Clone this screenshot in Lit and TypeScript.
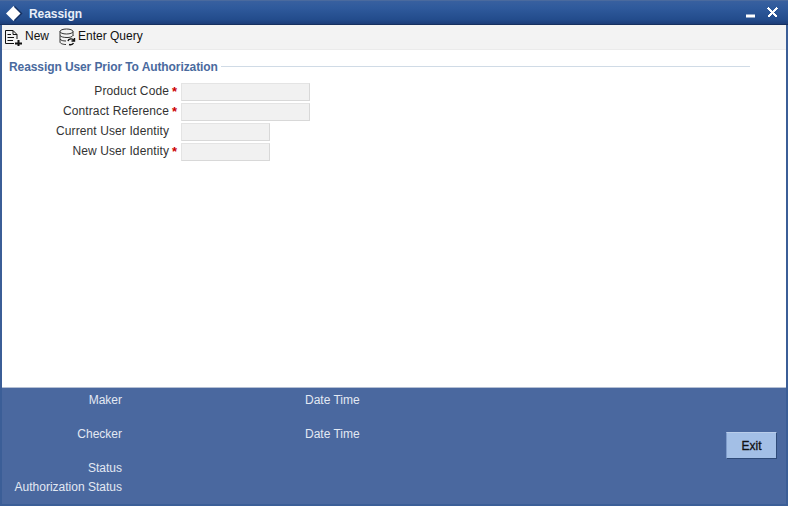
import { LitElement, html, css } from "lit";
import { customElement } from "lit/decorators.js";

@customElement("app-root")
export class AppRoot extends LitElement {
  static styles = css`
    :host { display: block; width: 788px; height: 506px; font-family: "Liberation Sans", Arial, sans-serif; font-size: 12px; overflow: hidden; }
    .win { box-sizing: border-box; width: 788px; height: 506px; display: flex; flex-direction: column; background: #3b5e97; padding: 0 2px 2px 2px; }
    .title { height: 25px; flex: none; margin: 0 -2px; padding: 2px 0 0 6px; box-sizing: border-box; display: flex; align-items: center; gap: 6px; color: #fff;
      background: linear-gradient(#38609f 0, #2f5a9c 30%, #234c8c 80%, #1c3d78 100%); border-top: 1px solid #4a6a9e; border-bottom: 1px solid #16305f; }
    .title .t { font-size: 12px; font-weight: bold; color: #e8eef8; letter-spacing: -0.05px; flex: 1; }
    .title svg { display: block; flex: none; }
    .ctrl { display: flex; align-items: center; gap: 12px; padding-right: 10px; margin-top: -3px; }
    .toolbar { height: 25px; flex: none; box-sizing: border-box; background: #f3f3f3; border-bottom: 1px solid #ebebeb; display: flex; align-items: center; padding: 0 0 2px 2px; gap: 9px; color: #111; }
    .tool { display: flex; align-items: center; gap: 2px; }
    .tool svg { display: block; margin-top: 1px; }
    .main { flex: 1; background: #fff; padding: 9px 0 0 7px; color: #333; }
    .legend { display: flex; align-items: center; width: 741px; gap: 3px; color: #4a6a9e; font-weight: bold; height: 16px; letter-spacing: -0.09px; }
    .legend .line { flex: 1; height: 1px; background: #d0dbe6; margin-top: -1px; }
    .form { margin-top: 7px; display: grid; grid-template-columns: 160px 12px auto; }
    .lab { height: 20px; line-height: 19px; text-align: right; color: #333; letter-spacing: 0.11px; white-space: nowrap; }
    .star { color: #c00; font-weight: bold; font-size: 13px; line-height: 19px; padding-left: 3px; }
    .field { height: 20px; display: flex; align-items: center; }
    .inp { box-sizing: border-box; height: 18px; background: #f1f1f1; border: 1px solid #e4e4e4; border-bottom-color: #d8d8d8; border-right-color: #d8d8d8; }
    .w1 { width: 129px; }
    .w2 { width: 89px; }
    .foot { height: 117px; flex: none; box-sizing: border-box; background: #4a689f; border-top: 1px solid #b5c0d4; display: grid; grid-template-columns: 120px 183px 1fr auto; grid-template-rows: 19px 34px 34px 19px; color: #e3e9f3; }
    .foot .r { text-align: right; align-self: end; line-height: 14px; }
    .foot .l { grid-column: 3; align-self: end; line-height: 14px; }
    .exit { grid-column: 4; grid-row: 2 / span 2; box-sizing: border-box; width: 51px; height: 27px; margin: 25px 9px 0 0; background: #a3bfe6; border: 1px solid; border-color: #b9cdea #2e4a78 #2e4a78 #7f9ccb; color: #111; font: 12px "Liberation Sans", Arial, sans-serif; -webkit-text-stroke: 0.3px #111; padding: 0; }
    .s3 { grid-row: 3; grid-column: 1; }
    .s4 { grid-row: 4; grid-column: 1; white-space: nowrap; }
    .g1 { grid-row: 1; grid-column: 1; }
    .g2 { grid-row: 2; grid-column: 1; }
    .d1 { grid-row: 1; }
    .d2 { grid-row: 2; }
  `;

  render() {
    const rows = [
      ["Product Code", true, "w1"],
      ["Contract Reference", true, "w1"],
      ["Current User Identity", false, "w2"],
      ["New User Identity", true, "w2"],
    ] as const;
    return html`<div class="win">
      <div class="title">
        <svg width="17" height="15" viewBox="0 0 17 15"><path d="M7.5 0 15 7.5 7.5 15 0 7.5Z" fill="#fff"/><path d="M8.5 0.5 15.5 7.5 8.5 14.5" fill="none" stroke="#142f5f" stroke-width="1.4"/></svg>
        <span class="t">Reassign</span>
        <div class="ctrl">
          <svg width="9" height="4" viewBox="0 0 9 4" style="margin-top:8px"><rect width="9" height="3" y="0.5" fill="#fff"/></svg>
          <svg width="11" height="11" viewBox="0 0 11 11" shape-rendering="crispEdges"><path d="M1 1 10 10M10 1 1 10" stroke="#fff" stroke-width="2"/></svg>
        </div>
      </div>
      <div class="toolbar">
        <div class="tool">
          <svg width="19" height="18" viewBox="0 0 19 18" fill="none" stroke="#111"><path d="M1.5 15.5V2.5H9L13 6.5V11"/><path d="M9 2.5V6.5H13M3.5 6.5H7M3.5 9.5H10M3.5 12.5H9M1.5 15.5H10"/><path d="M11 15.5H18M14.5 12V18" stroke-width="2"/></svg>
          <span>New</span>
        </div>
        <div class="tool">
          <svg width="18" height="18" viewBox="0 0 18 18" fill="none" stroke="#333"><ellipse cx="8.5" cy="3.5" rx="6.5" ry="2.5"/><path d="M2 3.5V14C2 15.5 5 16.5 8 16.5M15 3.5V8M2 7.5C3 9 6 9.5 9 9.5S14 9 15 7.5M2 11C3 12.5 5 13 8 13"/><path d="M10 13C10.5 10.5 14.5 10 16 12.5M16.5 10V13H13.5M11 16.5C13 17 15 16 15.5 15" stroke="#111" stroke-width="1.4"/></svg>
          <span>Enter Query</span>
        </div>
      </div>
      <div class="main">
        <div class="legend"><span>Reassign User Prior To Authorization</span><span class="line"></span></div>
        <div class="form">
          ${rows.map(([t, req, w]) => html`
            <div class="lab">${t}</div>
            <div class="star">${req ? "*" : ""}</div>
            <div class="field"><div class="inp ${w}"></div></div>`)}
        </div>
      </div>
      <div class="foot">
        <span class="r g1">Maker</span>
        <span class="l d1">Date Time</span>
        <span class="r g2">Checker</span>
        <span class="l d2">Date Time</span>
        <span class="r s3">Status</span>
        <span class="r s4">Authorization Status</span>
        <button class="exit">Exit</button>
      </div>
    </div>`;
  }
}
